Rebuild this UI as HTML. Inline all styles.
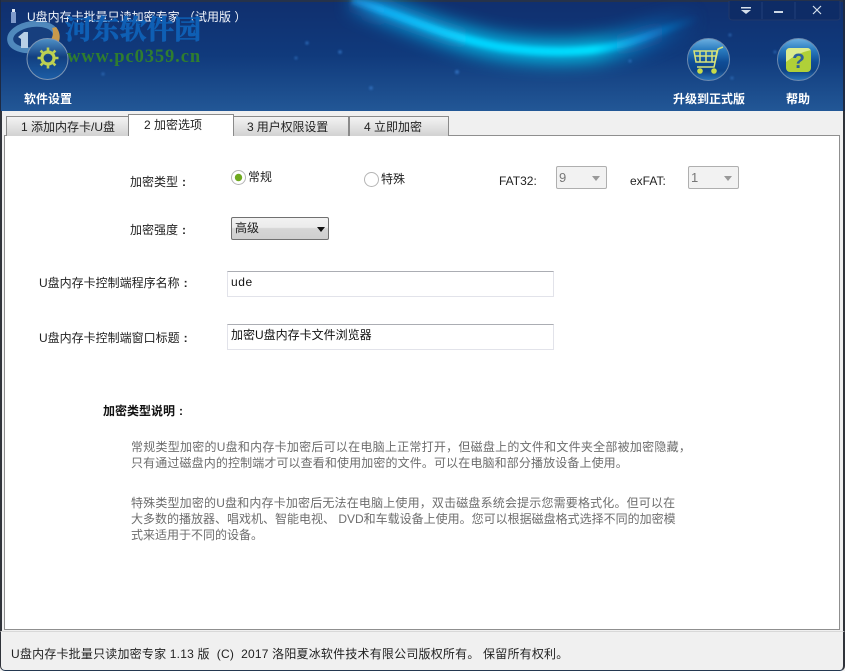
<!DOCTYPE html>
<html><head><meta charset="utf-8">
<style>
html,body{margin:0;padding:0;width:845px;height:671px;overflow:hidden;background:#f0f0f0}
*{box-sizing:border-box}
body{font-family:"Liberation Sans","WenQuanYi Zen Hei","Noto Sans CJK SC",sans-serif;font-size:12px;color:#222;position:relative}
.t{position:absolute;white-space:nowrap;line-height:16px}
.c{margin-left:4px;font-weight:bold}
.tab{position:absolute;top:116px;height:20px;border:1px solid #8a8a8a;border-bottom:none;background:linear-gradient(#f3f3f3,#d2d2d2);line-height:20px;color:#222;white-space:nowrap}
.inp{position:absolute;background:#fff;border:1px solid #e2e3ea;border-top-color:#abadb3;padding-left:3px;line-height:20px;height:26px;color:#111}
.g{color:#6d6d6d}
.sel{position:absolute;top:166px;width:51px;height:23px;border:1px solid #afafaf;border-radius:2px;background:#f2f2f2;color:#777;padding-left:2px;line-height:21px;font-size:13px}
.sel:after{content:"";position:absolute;right:6px;top:9px;border:4px solid transparent;border-top:5px solid #999;border-bottom:none}
.ball{position:absolute;border-radius:50%;border:1px solid #6d8bb0;background:linear-gradient(#6aaedf 0,#2a7cc0 26%,#0f4d96 56%,#0e4488 78%,#2a74b8 100%)}
</style></head><body>
<svg style="position:absolute;left:0;top:0" width="845" height="111" viewBox="0 0 845 111">
<defs>
<linearGradient id="bg" x1="0" y1="0" x2="0" y2="1"><stop offset="0" stop-color="#102f6e"/><stop offset=".5" stop-color="#103a7c"/><stop offset="1" stop-color="#225796"/></linearGradient>
<filter id="b1" x="-20%" y="-100%" width="140%" height="300%"><feGaussianBlur stdDeviation="9"/></filter>
<filter id="b2" x="-20%" y="-100%" width="140%" height="300%"><feGaussianBlur stdDeviation="2.5"/></filter>
<filter id="b3"><feGaussianBlur stdDeviation="1"/></filter>
<linearGradient id="wave" x1="345" x2="700" y1="0" y2="0" gradientUnits="userSpaceOnUse"><stop offset="0" stop-color="#1a90e0" stop-opacity=".5"/><stop offset=".1" stop-color="#12aaf0"/><stop offset=".35" stop-color="#06d4ff"/><stop offset=".7" stop-color="#04e0ff"/><stop offset=".85" stop-color="#0c90e0" stop-opacity=".7"/><stop offset="1" stop-color="#1060b0" stop-opacity="0"/></linearGradient>
<linearGradient id="lb" x1="0" y1="0" x2="0" y2="1"><stop offset="0" stop-color="#4f92c8"/><stop offset=".45" stop-color="#123f80"/><stop offset="1" stop-color="#1c5ea6"/></linearGradient>
</defs>
<rect width="845" height="111" fill="url(#bg)"/>
<rect y="0" width="845" height="2" fill="#26324a"/>
<path d="M352 0C400 14 440 36 500 47C540 53 580 53 610 47C640 41 660 30 700 18" fill="none" stroke="url(#wave)" stroke-width="22" filter="url(#b1)" opacity=".85"/>
<path d="M352 0C400 14 440 36 500 47C540 53 580 53 610 47C640 41 660 30 700 18" fill="none" stroke="url(#wave)" stroke-width="8" filter="url(#b2)"/>
<g fill="#3a7ed0" filter="url(#b3)" opacity=".7"><circle cx="340" cy="52" r="1.8"/><circle cx="371" cy="88" r="1.8"/><circle cx="457" cy="72" r="2"/><circle cx="307" cy="43" r="1.6"/><circle cx="730" cy="35" r="1.4"/><circle cx="775" cy="52" r="1.4"/><circle cx="732" cy="78" r="1.4"/><circle cx="630" cy="61" r="1.4"/><circle cx="296" cy="58" r="1.4"/><circle cx="103" cy="74" r="1.4"/></g>
<!-- logo swirl -->
<ellipse cx="33" cy="37" rx="23" ry="13" fill="#173f7e" stroke="#5a97c8" stroke-width="6" stroke-opacity=".85" transform="rotate(-8 33 37)"/>
<path d="M56 27C61 33 61 41 56 46L42 54L37 49L50 41C53 37 54 32 52 28Z" fill="#c99a4c"/>
<path d="M18 37L24 32H28V48H21V39Z" fill="#b9cfe6"/>
<circle cx="47.5" cy="59" r="20.5" fill="url(#lb)" stroke="#7f97b5" stroke-width="1"/>
<g fill="none" stroke="#bcd052"><circle cx="48" cy="58" r="6" stroke-width="3.2"/><path stroke-width="2.6" d="M48 47.5V51M48 65V68.5M37.5 58H41M55 58H58.5M40.6 50.6L43 53M53 63L55.4 65.4M55.4 50.6L53 53M43 63L40.6 65.4"/></g>
<!-- USB icon -->
<rect x="11" y="12" width="5" height="11" fill="#7f9aca"/><rect x="12" y="9" width="3" height="3" fill="#dfe8f4"/>
<!-- window controls -->
<path d="M729 1V17Q729 20 733 20H837Q840 20 840 17V1" fill="#0e2c66" stroke="#21396b" stroke-width="1"/>
<path d="M762 2V19M795 2V19" stroke="#214079" stroke-width="1"/>
<path d="M741 7H751V8.5H741ZM741 10H751L746 14Z" fill="#d6e0ec"/>
<rect x="774" y="11" width="9" height="2" fill="#cdd8e6"/>
<path d="M813 6L821 14M821 6L813 14" stroke="#d6e0ec" stroke-width="1.2"/>
<rect x="843" y="0" width="2" height="111" fill="#1d2a44"/>
<rect x="0" y="0" width="1" height="111" fill="#1d2a44"/>
</svg>

<div class="t" style="left:27px;top:9px;color:#f2f6fc;font-size:12px;">U盘内存卡批量只读加密专家 （试用版 ）</div>
<div class="t" style="left:65px;top:15px;font-family:'Liberation Serif','Noto Serif CJK SC',serif;font-weight:bold;font-size:27px;line-height:30px;letter-spacing:.3px;color:#0f5fb4;-webkit-text-stroke:.7px #0f5fb4">河东软件园</div>
<div class="t" style="left:67px;top:47px;font-family:'Liberation Serif',serif;font-weight:bold;font-size:18.5px;line-height:20px;letter-spacing:.9px;color:#2f7d2f">www.pc0359.cn</div>
<div class="t" style="left:24px;top:91px;color:#fff;font-weight:bold">软件设置</div>
<div class="t" style="left:673px;top:91px;color:#fff;font-weight:bold">升级到正式版</div>
<div class="t" style="left:786px;top:91px;color:#fff;font-weight:bold">帮助</div>

<div class="ball" style="left:687px;top:38px;width:43px;height:43px">
<svg style="position:absolute;left:-1px;top:-1px" width="43" height="43"><path d="M36 9L31 11L27 29H10M7 13H30L28 24H9Z M13 13V24M19 13V24M25 13V24M8 18H29" fill="none" stroke="#d7e37a" stroke-width="1.5"/><circle cx="13" cy="33" r="2.8" fill="#c8dc4a"/><circle cx="27" cy="33" r="2.8" fill="#c8dc4a"/></svg></div>
<div class="ball" style="left:777px;top:38px;width:43px;height:43px">
<svg style="position:absolute;left:-1px;top:-1px" width="43" height="43"><rect x="9" y="10" width="25" height="24" rx="4" fill="#b0d038"/><path d="M9 24Q20 15 34 12V14Q34 10 30 10H13Q9 10 9 14Z" fill="#dcec8e"/><text x="21.5" y="30" text-anchor="middle" font-family="Liberation Sans" font-weight="bold" font-size="21" fill="#2c5f9a">?</text></svg></div>

<!-- tab panel -->
<div style="position:absolute;left:4px;top:135px;width:836px;height:495px;background:#fff;border:1px solid #8f8f8f"></div>
<div class="tab" style="left:6px;width:123px;padding-left:14px">1 添加内存卡/U盘</div>
<div class="tab" style="left:128px;top:114px;width:106px;height:22px;background:#fff;border-color:#8a8a8a;line-height:20px;z-index:2;padding-left:15px">2 加密选项</div>
<div class="tab" style="left:233px;width:116px;padding-left:13px;letter-spacing:-.1px">3 用户权限设置</div>
<div class="tab" style="left:349px;width:100px;padding-left:14px">4 立即加密</div>

<div class="t" style="left:130px;top:174px;">加密类型<span class="c">:</span></div>
<svg style="position:absolute;left:230px;top:169px" width="17" height="17"><circle cx="8.5" cy="8.5" r="7" fill="#fff" stroke="#b5b5b5"/><circle cx="8.5" cy="8.5" r="3.7" fill="#6fa920"/></svg>
<div class="t" style="left:248px;top:169px;">常规</div>
<svg style="position:absolute;left:363px;top:171px" width="17" height="17"><circle cx="8.5" cy="8.5" r="7" fill="#fff" stroke="#b5b5b5"/></svg>
<div class="t" style="left:381px;top:171px;">特殊</div>
<div class="t" style="left:499px;top:173px;">FAT32:</div>
<div class="sel" style="left:556px">9</div>
<div class="t" style="left:630px;top:173px;">exFAT:</div>
<div class="sel" style="left:688px">1</div>

<div class="t" style="left:130px;top:222px;">加密强度<span class="c">:</span></div>
<div style="position:absolute;left:231px;top:217px;width:98px;height:23px;border:1px solid #707070;border-radius:2px;background:linear-gradient(#f2f2f2 0,#ebebeb 45%,#d6d6d6 50%,#cfcfcf 100%);padding-left:3px;line-height:21px">高级<span style="position:absolute;right:3px;top:9px;border:4px solid transparent;border-top:5px solid #111;border-bottom:none"></span></div>

<div class="t" style="left:39px;top:275px;">U盘内存卡控制端程序名称<span class="c">:</span></div>
<div class="inp" style="left:227px;top:271px;width:327px;letter-spacing:.6px">ude</div>
<div class="t" style="left:39px;top:330px;">U盘内存卡控制端窗口标题<span class="c">:</span></div>
<div class="inp" style="left:227px;top:324px;width:327px">加密U盘内存卡文件浏览器</div>

<div class="t" style="left:103px;top:403px;font-weight:bold;color:#111">加密类型说明<span class="c">:</span></div>
<div class="t g" style="left:131px;top:439px;letter-spacing:.25px">常规类型加密的U盘和内存卡加密后可以在电脑上正常打开，但磁盘上的文件和文件夹全部被加密隐藏，</div>
<div class="t g" style="left:131px;top:455px;letter-spacing:.12px">只有通过磁盘内的控制端才可以查看和使用加密的文件。可以在电脑和部分播放设备上使用。</div>
<div class="t g" style="left:131px;top:495px;letter-spacing:.17px">特殊类型加密的U盘和内存卡加密后无法在电脑上使用，双击磁盘系统会提示您需要格式化。但可以在</div>
<div class="t g" style="left:131px;top:511px;">大多数的播放器、唱戏机、智能电视、 DVD和车载设备上使用。您可以根据磁盘格式选择不同的加密模</div>
<div class="t g" style="left:131px;top:527px;">式来适用于不同的设备。</div>

<!-- status bar -->
<div style="position:absolute;left:0;top:631px;width:845px;height:40px;background:#f0f0f0;border-top:1px solid #d8d8d8;border-left:1px solid #30333a;border-right:2px solid #30333a;border-bottom:1px solid #243850;border-radius:0 0 5px 5px"></div>
<div class="t" style="left:11px;top:646px;color:#222;letter-spacing:.2px">U盘内存卡批量只读加密专家 1.13 版&nbsp; (C)&nbsp; 2017 洛阳夏冰软件技术有限公司版权所有。 保留所有权利。</div>
<div style="position:absolute;left:0;top:111px;width:2px;height:520px;background:#30333a"></div>
<div style="position:absolute;right:0;top:111px;width:2px;height:520px;background:#30333a"></div>
</body></html>
